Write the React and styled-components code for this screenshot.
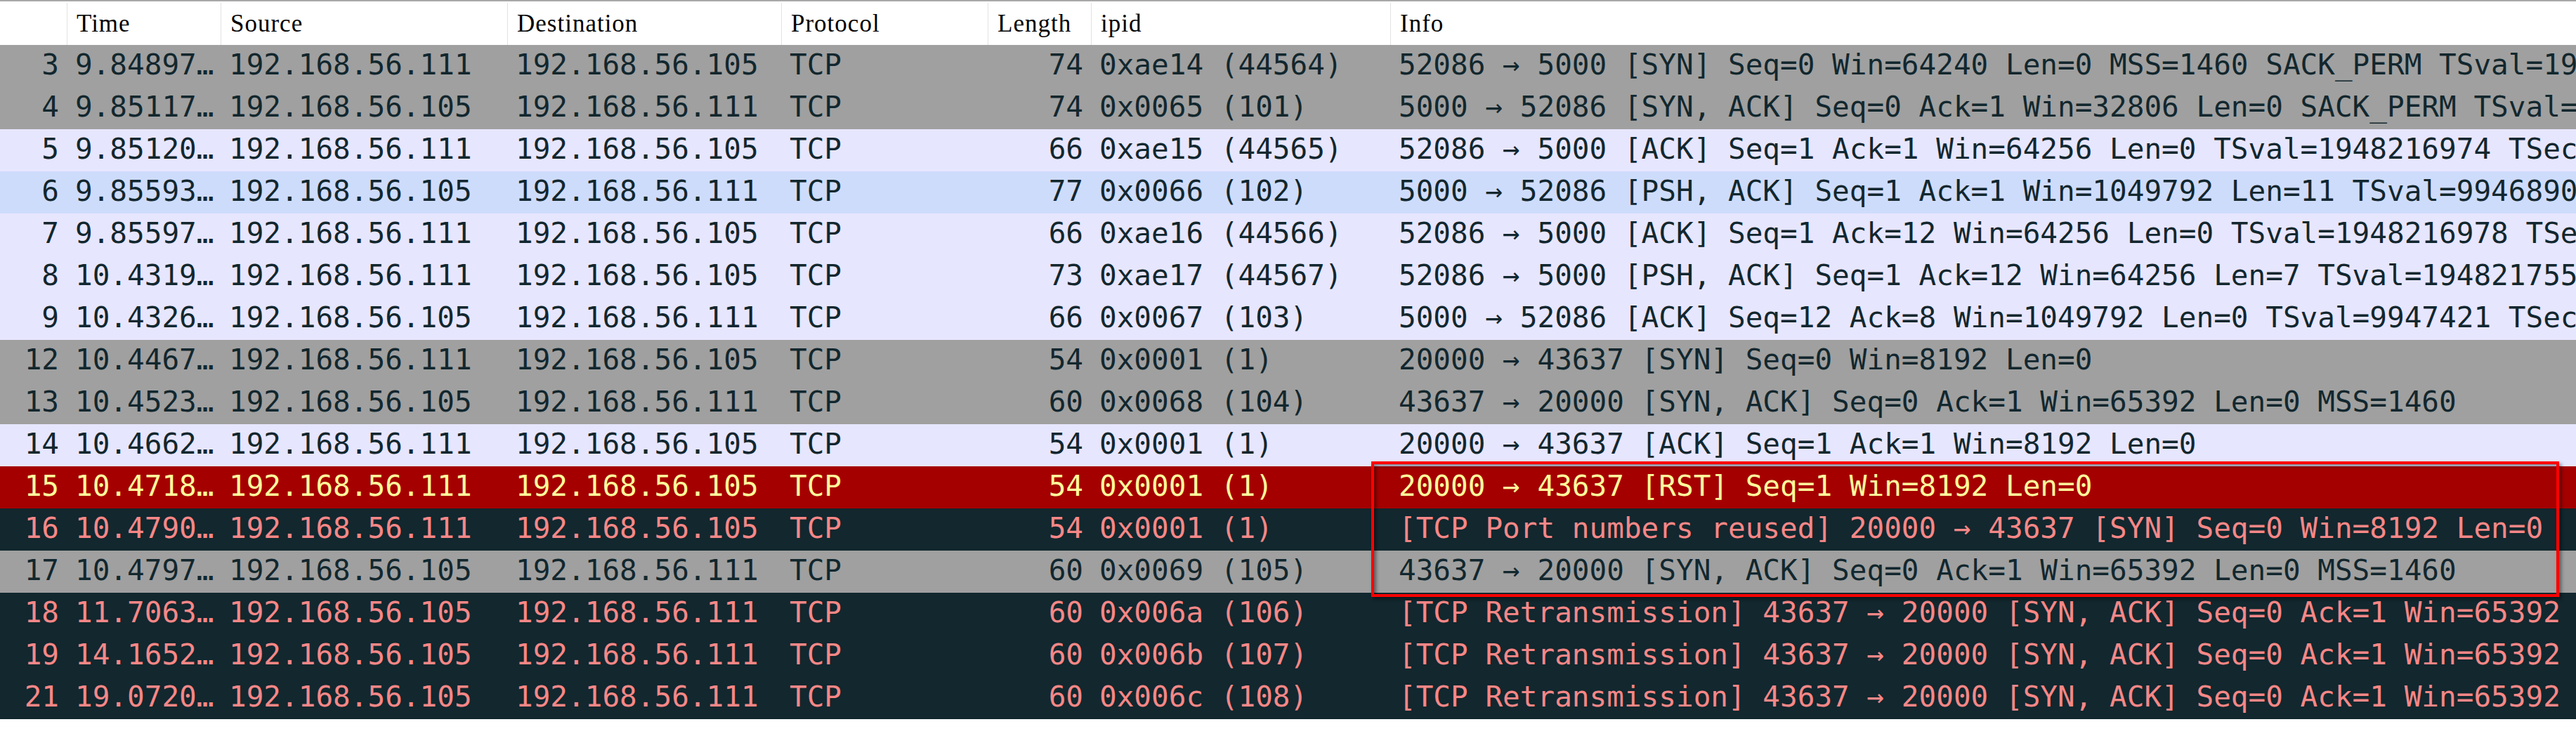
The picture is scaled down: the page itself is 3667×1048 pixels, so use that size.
import React from "react";
import styled, { createGlobalStyle } from "styled-components";

const Global = createGlobalStyle`
  html, body { margin: 0; padding: 0; background: #ffffff; }
  body { overflow: hidden; }
`;

const COLS = "95px 219px 408px 390px 294px 147px 426px 1fr";

const palette = {
  gray: { bg: "#a0a0a0", fg: "#12272e" },
  tcp: { bg: "#e7e6ff", fg: "#12272e" },
  hover: { bg: "#cedcfc", fg: "#12272e" },
  rst: { bg: "#a40000", fg: "#fffc9c" },
  bad: { bg: "#12272e", fg: "#f78787" },
};

const Page = styled.div`
  position: relative;
  width: 3667px;
  height: 1048px;
  border-top: 2px solid #a8a8a8;
  box-sizing: border-box;
  background: #ffffff;
`;

const Header = styled.div`
  display: grid;
  grid-template-columns: ${COLS};
  height: 60px;
  margin-top: 2px;
  background: #ffffff;
`;

const HeadCell = styled.div`
  font-family: "Liberation Serif", "Times New Roman", serif;
  font-size: 35px;
  letter-spacing: 1px;
  line-height: 60px;
  color: #000000;
  padding-left: ${(p) => (p.$first ? 0 : 13)}px;
  border-left: ${(p) => (p.$first ? "none" : "1px solid #e2e2e2")};
  white-space: nowrap;
  overflow: hidden;
`;

const Row = styled.div`
  display: grid;
  grid-template-columns: ${COLS};
  height: 60px;
  background: ${(p) => palette[p.$kind].bg};
  color: ${(p) => palette[p.$kind].fg};
`;

const Cell = styled.div`
  font-family: "DejaVu Sans Mono", "Liberation Mono", monospace;
  font-size: 41px;
  line-height: 56px;
  padding: 0 11px 4px 12px;
  white-space: nowrap;
  overflow: hidden;
  text-align: ${(p) => (p.$right ? "right" : "left")};
`;

const Highlight = styled.div`
  position: absolute;
  left: 1952px;
  top: 655px;
  width: 1691px;
  height: 193px;
  box-sizing: border-box;
  border: 4px solid #ff0000;
  box-shadow: 3px 3px 5px rgba(0, 0, 0, 0.45), inset 3px 3px 5px rgba(0, 0, 0, 0.45);
  pointer-events: none;
`;

const A = "192.168.56.111";
const B = "192.168.56.105";

const rows = [
  ["3", "9.84897…", A, B, "74", "0xae14 (44564)", "52086 → 5000 [SYN] Seq=0 Win=64240 Len=0 MSS=1460 SACK_PERM TSval=1948216970 TSecr=0 WS=128", "gray"],
  ["4", "9.85117…", B, A, "74", "0x0065 (101)", "5000 → 52086 [SYN, ACK] Seq=0 Ack=1 Win=32806 Len=0 SACK_PERM TSval=9946890 TSecr=1948216970 WS=32", "gray"],
  ["5", "9.85120…", A, B, "66", "0xae15 (44565)", "52086 → 5000 [ACK] Seq=1 Ack=1 Win=64256 Len=0 TSval=1948216974 TSecr=9946890", "tcp"],
  ["6", "9.85593…", B, A, "77", "0x0066 (102)", "5000 → 52086 [PSH, ACK] Seq=1 Ack=1 Win=1049792 Len=11 TSval=9946890 TSecr=1948216974", "hover"],
  ["7", "9.85597…", A, B, "66", "0xae16 (44566)", "52086 → 5000 [ACK] Seq=1 Ack=12 Win=64256 Len=0 TSval=1948216978 TSecr=9946890", "tcp"],
  ["8", "10.4319…", A, B, "73", "0xae17 (44567)", "52086 → 5000 [PSH, ACK] Seq=1 Ack=12 Win=64256 Len=7 TSval=1948217550 TSecr=9946890", "tcp"],
  ["9", "10.4326…", B, A, "66", "0x0067 (103)", "5000 → 52086 [ACK] Seq=12 Ack=8 Win=1049792 Len=0 TSval=9947421 TSecr=1948217550", "tcp"],
  ["12", "10.4467…", A, B, "54", "0x0001 (1)", "20000 → 43637 [SYN] Seq=0 Win=8192 Len=0", "gray"],
  ["13", "10.4523…", B, A, "60", "0x0068 (104)", "43637 → 20000 [SYN, ACK] Seq=0 Ack=1 Win=65392 Len=0 MSS=1460", "gray"],
  ["14", "10.4662…", A, B, "54", "0x0001 (1)", "20000 → 43637 [ACK] Seq=1 Ack=1 Win=8192 Len=0", "tcp"],
  ["15", "10.4718…", A, B, "54", "0x0001 (1)", "20000 → 43637 [RST] Seq=1 Win=8192 Len=0", "rst"],
  ["16", "10.4790…", A, B, "54", "0x0001 (1)", "[TCP Port numbers reused] 20000 → 43637 [SYN] Seq=0 Win=8192 Len=0", "bad"],
  ["17", "10.4797…", B, A, "60", "0x0069 (105)", "43637 → 20000 [SYN, ACK] Seq=0 Ack=1 Win=65392 Len=0 MSS=1460", "gray"],
  ["18", "11.7063…", B, A, "60", "0x006a (106)", "[TCP Retransmission] 43637 → 20000 [SYN, ACK] Seq=0 Ack=1 Win=65392 Len=0 MSS=1460", "bad"],
  ["19", "14.1652…", B, A, "60", "0x006b (107)", "[TCP Retransmission] 43637 → 20000 [SYN, ACK] Seq=0 Ack=1 Win=65392 Len=0 MSS=1460", "bad"],
  ["21", "19.0720…", B, A, "60", "0x006c (108)", "[TCP Retransmission] 43637 → 20000 [SYN, ACK] Seq=0 Ack=1 Win=65392 Len=0 MSS=1460", "bad"],
];

const headers = ["", "Time", "Source", "Destination", "Protocol", "Length", "ipid", "Info"];

export default function App() {
  return (
    <>
      <Global />
      <Page>
        <Header>
          {headers.map((h, i) => (
            <HeadCell key={i} $first={i === 0}>
              {h}
            </HeadCell>
          ))}
        </Header>
        {rows.map((r) => (
          <Row key={r[0]} $kind={r[7]}>
            <Cell $right>{r[0]}</Cell>
            <Cell>{r[1]}</Cell>
            <Cell>{r[2]}</Cell>
            <Cell>{r[3]}</Cell>
            <Cell>TCP</Cell>
            <Cell $right>{r[4]}</Cell>
            <Cell>{r[5]}</Cell>
            <Cell>{r[6]}</Cell>
          </Row>
        ))}
        <Highlight />
      </Page>
    </>
  );
}
